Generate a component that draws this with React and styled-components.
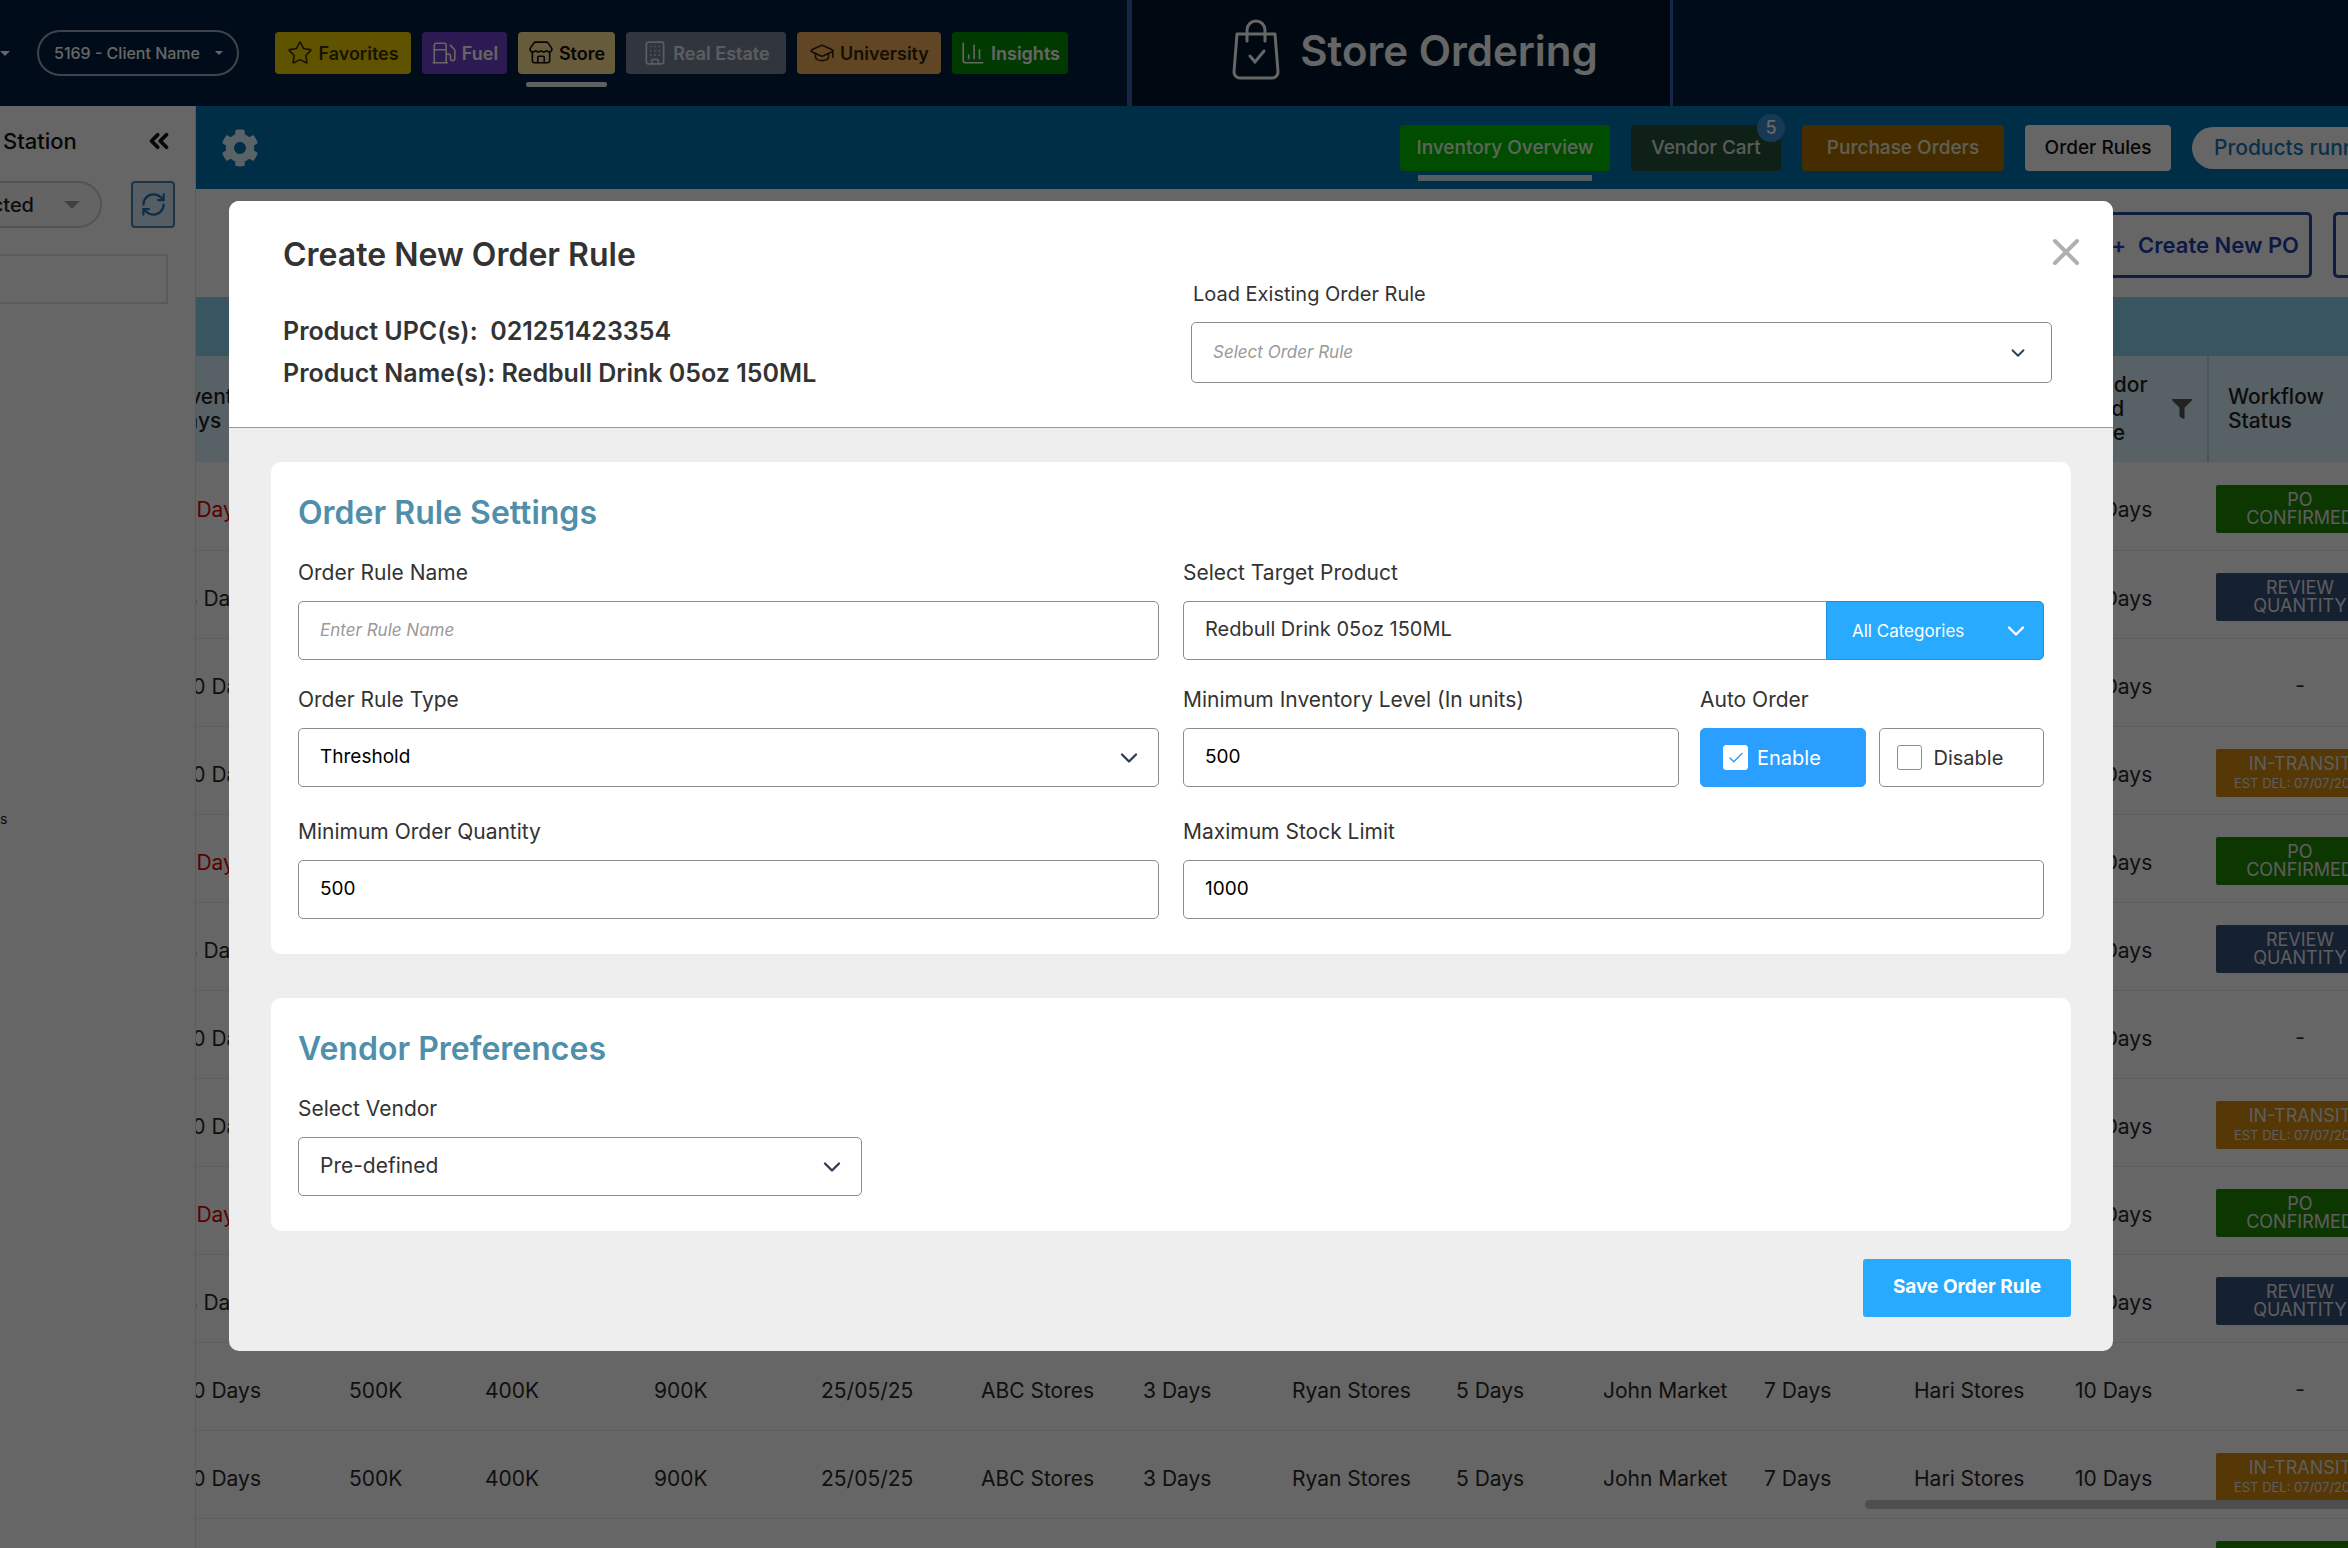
import { useState } from "react";
import styled, { createGlobalStyle } from "styled-components";
import {
  Star,
  Fuel,
  Store,
  Building,
  GraduationCap,
  ChartColumn,
  ChevronDown,
  ChevronsLeft,
  RefreshCw,
  Check,
} from "lucide-react";
import { FaCog, FaFilter } from "react-icons/fa";

const MODULES = [
  { name: "Favorites", icon: Star, bg: "#f0d000", color: "#3a3000", width: 136 },
  { name: "Fuel", icon: Fuel, bg: "#7242cc", color: "#ffffff", width: 85 },
  { name: "Store", icon: Store, bg: "#ffe394", color: "#111111", width: 97, active: true },
  { name: "Real Estate", icon: Building, bg: "#7c889c", color: "#e4e8ee", width: 160 },
  { name: "University", icon: GraduationCap, bg: "#efb05c", color: "#3a2400", width: 144 },
  { name: "Insights", icon: ChartColumn, bg: "#009200", color: "#ffffff", width: 116 },
];

const TABS = [
  { name: "Inventory Overview", bg: "#00c000", color: "#e8ffe8", width: 210, active: true },
  { name: "Vendor Cart", bg: "#265438", color: "#dfe8df", width: 150, count: 5 },
  { name: "Purchase Orders", bg: "#ac7200", color: "#f4ead0", width: 202 },
  { name: "Order Rules", bg: "#ffffff", color: "#111111", width: 146 },
];

const COLUMNS = [153, 136, 169, 167, 160, 162, 149, 164, 147, 161, 150, 161, 133, 140];

const STATUSES = ["confirmed", "review", "none", "transit"];
const ROWS = Array.from({ length: 13 }, (_, i) => STATUSES[i % 4]);
const DAYS = {
  confirmed: { text: "5 Days", end: 50 },
  review: { text: "8 Days", end: 57 },
  none: { text: "10 Days", end: 65 },
  transit: { text: "10 Days", end: 65 },
};

const CELLS = [
  "500K",
  "400K",
  "900K",
  "25/05/25",
  "ABC Stores",
  "3 Days",
  "Ryan Stores",
  "5 Days",
  "John Market",
  "7 Days",
  "Hari Stores",
  "10 Days",
];

const BagIcon = () => (
  <svg width="48" height="62" viewBox="0 0 48 62" fill="none" stroke="#ffffff" strokeWidth="3" strokeLinecap="round">
    <path d="M5 15h38l3 38a6 6 0 0 1-6 6H8a6 6 0 0 1-6-6z" strokeLinejoin="round" />
    <path d="M15 22V11a9 9 0 0 1 18 0v11" />
    <path d="M18 37l5 6 9-11" />
  </svg>
);

const CloseIcon = () => (
  <svg width="28" height="28" viewBox="0 0 28 28" stroke="#b0b0b0" strokeWidth="4" strokeLinecap="round">
    <path d="M3 3l22 22M25 3L3 25" />
  </svg>
);

const StatusBadge = ({ status }) => {
  if (status === "none") return <Dash>-</Dash>;
  if (status === "confirmed")
    return (
      <Badge $bg="#228a00">
        PO
        <br />
        CONFIRMED
      </Badge>
    );
  if (status === "review")
    return (
      <Badge $bg="#35507c">
        REVIEW
        <br />
        QUANTITY
      </Badge>
    );
  return (
    <Badge $bg="#d68a10">
      IN-TRANSIT
      <br />
      <small>EST DEL: 07/07/2025</small>
    </Badge>
  );
};

const TopBar = () => (
  <Header>
    <Client>
      <Caret $size={5} />
      <ClientButton type="button">
        5169 - Client Name <Caret />
      </ClientButton>
    </Client>
    <Modules>
      {MODULES.map(({ name, icon: Icon, bg, color, width, active }) => (
        <ModuleLink key={name} href="#" $bg={bg} $color={color} $width={width} $active={active}>
          <Icon size={26} strokeWidth={1.5} />
          {name}
        </ModuleLink>
      ))}
    </Modules>
    <PageTitle>
      <BagIcon />
      Store Ordering
    </PageTitle>
  </Header>
);

const SideBar = () => (
  <Side>
    <SideTop>
      Station
      <ChevronsLeft size={30} strokeWidth={3} />
    </SideTop>
    <SideTools>
      <SelectedPill type="button">
        Selected <Caret $size={8} />
      </SelectedPill>
      <RefreshButton type="button" aria-label="Refresh">
        <RefreshCw size={27} />
      </RefreshButton>
    </SideTools>
    <SideSearch aria-label="Search stations" />
    <SideNote>s</SideNote>
  </Side>
);

const Inventory = () => (
  <Main>
    <Tabs>
      <FaCog size={38} />
      <TabList>
        {TABS.map((tab) => (
          <Tab key={tab.name} href="#" $bg={tab.bg} $color={tab.color} $width={tab.width} $active={tab.active}>
            {tab.name}
            {tab.count ? <Count>{tab.count}</Count> : null}
          </Tab>
        ))}
        <Running type="button">Products running</Running>
      </TabList>
    </Tabs>
    <Actions>
      <OutlineButton type="button">
        <span>+</span> Create New PO
      </OutlineButton>
      <OutlineButton type="button" aria-label="More" $cut />
    </Actions>
    <Table>
      <colgroup>
        {COLUMNS.map((width, i) => (
          <col key={i} width={width} />
        ))}
      </colgroup>
      <thead>
        <GroupRow>
          <th colSpan={14} />
        </GroupRow>
        <HeadRow>
          <th>
            <DaysText $end={70}>
              Inventory
              <br />
              Days
            </DaysText>
          </th>
          <th colSpan={11} />
          <th>
            <LeadTime>
              <span>
                Vendor
                <br />
                Lead
                <br />
                Time
              </span>
              <FaFilter size={20} />
            </LeadTime>
          </th>
          <th>
            Workflow
            <br />
            Status
          </th>
        </HeadRow>
      </thead>
      <tbody>
        {ROWS.map((status, i) => (
          <Row key={i}>
            <td>
              <DaysText $end={DAYS[status].end} $low={status === "confirmed"}>
                {DAYS[status].text}
              </DaysText>
            </td>
            {CELLS.map((cell, n) => (
              <td key={n}>{cell}</td>
            ))}
            <td>
              <StatusBadge status={status} />
            </td>
          </Row>
        ))}
      </tbody>
    </Table>
    <ScrollThumb />
  </Main>
);

const Select = ({ id, options, icon = 28, muted, dark }) => (
  <SelectWrap>
    <SelectInput id={id} $muted={muted} $dark={dark}>
      {options.map((option) => (
        <option key={option}>{option}</option>
      ))}
    </SelectInput>
    <ChevronDown size={icon} strokeWidth={2} />
  </SelectWrap>
);

const OrderRuleModal = () => {
  const [auto, setAuto] = useState(true);

  return (
    <Overlay>
      <Modal role="dialog" aria-labelledby="modal-title">
        <ModalHeader>
          <ProductInfo>
            <ModalTitle id="modal-title">Create New Order Rule</ModalTitle>
            <p>Product UPC(s):&nbsp; 021251423354</p>
            <p>Product Name(s): Redbull Drink 05oz 150ML</p>
          </ProductInfo>
          <LoadRule>
            <Label htmlFor="load">Load Existing Order Rule</Label>
            <Select id="load" options={["Select Order Rule"]} icon={22} muted />
          </LoadRule>
          <CloseButton type="button" aria-label="Close">
            <CloseIcon />
          </CloseButton>
        </ModalHeader>

        <ModalBody>
          <Card>
            <CardTitle>Order Rule Settings</CardTitle>
            <Fields>
              <Field>
                <Label htmlFor="name">Order Rule Name</Label>
                <Input id="name" placeholder="Enter Rule Name" />
              </Field>
              <Field>
                <Label htmlFor="product">Select Target Product</Label>
                <ProductGroup>
                  <Input id="product" defaultValue="Redbull Drink 05oz 150ML" $large />
                  <CategoryWrap>
                    <CategorySelect aria-label="Category">
                      <option>All Categories</option>
                    </CategorySelect>
                    <ChevronDown size={28} />
                  </CategoryWrap>
                </ProductGroup>
              </Field>
              <Field $spaced>
                <Label htmlFor="type">Order Rule Type</Label>
                <Select id="type" options={["Threshold"]} dark />
              </Field>
              <LevelRow>
                <Field>
                  <Label htmlFor="level">Minimum Inventory Level (In units)</Label>
                  <Input id="level" defaultValue="500" />
                </Field>
                <Field>
                  <Label as="span">Auto Order</Label>
                  <Toggles>
                    <Toggle $on={auto}>
                      <Box>
                        <input type="checkbox" checked={auto} onChange={() => setAuto(true)} />
                        <Check size={18} />
                      </Box>
                      Enable
                    </Toggle>
                    <Toggle $on={!auto}>
                      <Box>
                        <input type="checkbox" checked={!auto} onChange={() => setAuto(false)} />
                        <Check size={18} />
                      </Box>
                      Disable
                    </Toggle>
                  </Toggles>
                </Field>
              </LevelRow>
              <Field>
                <Label htmlFor="min">Minimum Order Quantity</Label>
                <Input id="min" defaultValue="500" />
              </Field>
              <Field>
                <Label htmlFor="max">Maximum Stock Limit</Label>
                <Input id="max" defaultValue="1000" />
              </Field>
            </Fields>
          </Card>

          <Card>
            <CardTitle>Vendor Preferences</CardTitle>
            <VendorField>
              <Label htmlFor="vendor">Select Vendor</Label>
              <Select id="vendor" options={["Pre-defined"]} />
            </VendorField>
          </Card>

          <SaveButton type="button">Save Order Rule</SaveButton>
        </ModalBody>
      </Modal>
    </Overlay>
  );
};

const App = () => {
  return (
    <>
      <GlobalStyle />
      <Page>
        <TopBar />
        <Content>
          <SideBar />
          <Inventory />
        </Content>
      </Page>
      <OrderRuleModal />
    </>
  );
};

const GlobalStyle = createGlobalStyle`
  * {
    box-sizing: border-box;
  }
  body {
    margin: 0;
    font-family: Inter, "Open Sans", sans-serif;
    color: #333333;
  }
  button, input, select {
    font-family: inherit;
  }
  p, h1, h2 {
    margin: 0;
  }
`;

const Page = styled.div`
  height: 100vh;
  overflow: hidden;
  display: flex;
  flex-direction: column;
  background: #ffffff;
`;

const Header = styled.header`
  height: 106px;
  flex-shrink: 0;
  display: flex;
  align-items: center;
  background: #002040;
`;

const Client = styled.div`
  width: 275px;
  display: flex;
  align-items: center;
  gap: 27px;
  color: #ffffff;
`;

const ClientButton = styled.button`
  width: 202px;
  height: 46px;
  display: flex;
  align-items: center;
  justify-content: space-between;
  padding: 0 14px 0 15px;
  border: 2px solid #a0a8b4;
  border-radius: 23px;
  background: transparent;
  color: #ffffff;
  font-size: 16px;
  font-weight: 500;
  white-space: nowrap;
`;

const Caret = styled.span`
  border: ${({ $size }) => $size || 4}px solid transparent;
  border-top-color: currentColor;
  border-bottom: 0;
`;

const Modules = styled.nav`
  width: 852px;
  display: flex;
  gap: 11px;
`;

const ModuleLink = styled.a`
  position: relative;
  width: ${({ $width }) => $width}px;
  height: 42px;
  display: flex;
  align-items: center;
  justify-content: center;
  gap: 5px;
  border-radius: 4px;
  background: ${({ $bg }) => $bg};
  color: ${({ $color }) => $color};
  font-size: 18px;
  font-weight: 600;
  text-decoration: none;
  white-space: nowrap;

  &::after {
    content: "";
    display: ${({ $active }) => ($active ? "block" : "none")};
    position: absolute;
    left: 8px;
    right: 8px;
    bottom: -13px;
    height: 5px;
    border-radius: 2px;
    background: #e8eef8;
  }
`;

const PageTitle = styled.div`
  width: 546px;
  height: 106px;
  display: flex;
  align-items: center;
  justify-content: center;
  gap: 20px;
  padding: 0 0 6px 28px;
  border-left: 5px solid #375fb0;
  border-right: 3px solid #375fb0;
  background: #00182c;
  color: #ffffff;
  font-size: 42px;
  font-weight: 600;
`;

const Content = styled.div`
  flex: 1;
  min-height: 0;
  display: flex;
`;

const Side = styled.aside`
  width: 196px;
  flex-shrink: 0;
  border-right: 1px solid #e0e0e0;
`;

const SideTop = styled.div`
  display: flex;
  align-items: center;
  justify-content: space-between;
  padding: 20px 21px 0 3px;
  color: #111111;
  font-size: 22px;
  font-weight: 500;
`;

const SideTools = styled.div`
  display: flex;
  align-items: center;
  justify-content: space-between;
  margin-top: 25px;
  padding-right: 20px;
`;

const SelectedPill = styled.button`
  width: 102px;
  height: 47px;
  display: flex;
  align-items: center;
  justify-content: flex-end;
  gap: 30px;
  padding: 0 20px 0 0;
  overflow: hidden;
  border: 2px solid #d0d0d0;
  border-left: 0;
  border-radius: 0 24px 24px 0;
  background: #fafafa;
  color: #222222;
  font-size: 20px;
  font-weight: 500;

  ${Caret} {
    color: #a0a0a0;
  }
`;

const RefreshButton = styled.button`
  width: 44px;
  height: 47px;
  display: grid;
  place-items: center;
  padding: 0;
  border: 2px solid #4a80b0;
  border-radius: 4px;
  background: #d8ecfa;
  color: #2a70b0;
`;

const SideSearch = styled.input`
  width: 168px;
  height: 50px;
  margin-top: 26px;
  border: 2px solid #e0e0e0;
  border-left: 0;
`;

const SideNote = styled.p`
  margin-top: 506px;
  color: #222222;
  font-size: 14px;
  line-height: 18px;
`;

const Main = styled.main`
  position: relative;
  flex: 1;
  min-width: 0;
  overflow: hidden;
`;

const Tabs = styled.div`
  height: 83px;
  display: flex;
  align-items: center;
  justify-content: space-between;
  padding-left: 25px;
  background: #0073b0;
  color: #dff4ff;
`;

const TabList = styled.nav`
  display: flex;
  align-items: center;
  gap: 21px;
`;

const Tab = styled.a`
  position: relative;
  width: ${({ $width }) => $width}px;
  height: 46px;
  display: grid;
  place-items: center;
  border-radius: 4px;
  background: ${({ $bg }) => $bg};
  color: ${({ $color }) => $color};
  font-size: 19px;
  font-weight: 500;
  text-decoration: none;
  white-space: nowrap;

  &::after {
    content: "";
    display: ${({ $active }) => ($active ? "block" : "none")};
    position: absolute;
    left: 18px;
    right: 18px;
    bottom: -10px;
    height: 6px;
    background: #d0e8f4;
  }
`;

const Count = styled.span`
  position: absolute;
  top: -11px;
  right: -4px;
  width: 28px;
  height: 28px;
  border-radius: 50%;
  background: #3a90d8;
  color: #ffffff;
  font-size: 18px;
  line-height: 28px;
  text-align: center;
`;

const Running = styled.button`
  width: 156px;
  height: 42px;
  padding: 0 0 0 22px;
  overflow: hidden;
  border: 0;
  border-radius: 21px 0 0 21px;
  background: #ffffff;
  color: #1478b8;
  font-size: 21px;
  font-weight: 500;
  text-align: left;
  white-space: nowrap;
`;

const Actions = styled.div`
  height: 108px;
  display: flex;
  justify-content: flex-end;
  gap: 21px;
  padding-top: 23px;
`;

const OutlineButton = styled.button`
  width: ${({ $cut }) => ($cut ? 15 : 216)}px;
  height: 66px;
  display: flex;
  align-items: center;
  justify-content: flex-end;
  gap: 12px;
  padding: 0 ${({ $cut }) => ($cut ? 0 : 10)}px 0 0;
  border: 3px solid #2848a0;
  border-right-width: ${({ $cut }) => ($cut ? 0 : 3)}px;
  border-radius: ${({ $cut }) => ($cut ? "5px 0 0 5px" : "5px")};
  background: #ffffff;
  color: #1f3fae;
  font-size: 22px;
  font-weight: 600;
  white-space: nowrap;
`;

const Table = styled.table`
  width: 100%;
  table-layout: fixed;
  border-collapse: collapse;
`;

const GroupRow = styled.tr`
  height: 59px;
  background: #8cd4f0;
`;

const HeadRow = styled.tr`
  height: 106px;
  background: #dcf2fc;
  color: #222222;

  th {
    padding: 0;
    font-size: 21px;
    font-weight: 500;
    line-height: 24px;
    text-align: left;
  }
  th:last-child {
    padding-left: 19px;
    border-left: 2px solid #b4d4e4;
  }
`;

const LeadTime = styled.div`
  display: flex;
  align-items: center;
  justify-content: space-between;
  padding-right: 15px;

  svg {
    color: #555555;
  }
`;

const Row = styled.tr`
  height: 88px;

  td {
    padding: 8px 0 0;
    border-bottom: 1px solid #ececec;
    color: #2a2a2a;
    font-size: 21px;
    white-space: nowrap;
  }
  td:last-child {
    padding: 6px 0 0 8px;
  }
`;

const DaysText = styled.span`
  width: ${({ $end }) => $end}px;
  display: flex;
  justify-content: flex-end;
  color: ${({ $low }) => ($low ? "#e00000" : "inherit")};
`;

const Badge = styled.div`
  width: 168px;
  height: 48px;
  padding-top: 6px;
  border-radius: 2px;
  background: ${({ $bg }) => $bg};
  color: #e8e8e8;
  font-size: 18px;
  line-height: 18px;
  text-align: center;

  small {
    font-size: 13px;
  }
`;

const Dash = styled.div`
  width: 168px;
  text-align: center;
`;

const ScrollThumb = styled.div`
  position: absolute;
  right: 0;
  bottom: 39px;
  width: 483px;
  height: 9px;
  border-radius: 5px 0 0 5px;
  background: #c4c4c4;
`;

const Overlay = styled.div`
  position: fixed;
  inset: 0;
  overflow: auto;
  padding: 201px 235px 0 229px;
  background: rgba(0, 0, 0, 0.6);
`;

const Modal = styled.section`
  border-radius: 10px;
  overflow: hidden;
  background: #eeeeee;
`;

const Label = styled.label`
  font-size: 21px;
  line-height: 28px;
`;

const ModalHeader = styled.div`
  display: flex;
  align-items: flex-start;
  height: 227px;
  padding: 0 33px 0 54px;
  border-bottom: 1px solid #999999;
  background: #ffffff;
`;

const ProductInfo = styled.div`
  flex: 1;
  padding-top: 32px;

  p {
    font-size: 25px;
    font-weight: 600;
    line-height: 42px;
  }
`;

const ModalTitle = styled.h1`
  margin-bottom: 33px;
  font-size: 32px;
  font-weight: 600;
  line-height: 44px;
`;

const CloseButton = styled.button`
  margin-top: 37px;
  padding: 0;
  border: 0;
  background: transparent;
  line-height: 0;
  cursor: pointer;
`;

const ModalBody = styled.div`
  display: flex;
  flex-direction: column;
  padding: 34px 42px;
`;

const Card = styled.section`
  padding: 29px 27px 35px;
  border-radius: 10px;
  background: #ffffff;

  & + & {
    margin-top: 44px;
  }
`;

const CardTitle = styled.h2`
  margin-bottom: 24px;
  color: #4f8fab;
  font-size: 32px;
  font-weight: 600;
  line-height: 44px;
`;

const Fields = styled.div`
  display: grid;
  grid-template-columns: 1fr 1fr;
  gap: 26px 24px;
`;

const Field = styled.div`
  min-width: 0;
  display: flex;
  flex-direction: column;
  gap: 14px;
  padding-bottom: ${({ $spaced }) => ($spaced ? 5 : 0)}px;
`;

const VendorField = styled(Field)`
  width: 564px;
`;

const LevelRow = styled.div`
  display: grid;
  grid-template-columns: 1fr 344px;
  gap: 21px;
`;

const Input = styled.input`
  width: 100%;
  height: 59px;
  padding: 0 21px 3px;
  border: 1px solid #8c8c8c;
  border-radius: 5px;
  background: #ffffff;
  color: ${({ $large }) => ($large ? "#333333" : "#000000")};
  font-size: ${({ $large }) => ($large ? 20 : 19)}px;

  &::placeholder {
    color: #999999;
    font-size: 17px;
    font-style: italic;
  }
`;

const SelectWrap = styled.div`
  display: grid;
  align-items: center;

  > * {
    grid-area: 1 / 1;
  }
  svg {
    justify-self: end;
    margin-right: 16px;
    color: #2c3e57;
    pointer-events: none;
  }
`;

const SelectInput = styled.select`
  width: 100%;
  height: 59px;
  padding: 0 21px 2px;
  appearance: none;
  border: 1px solid #8c8c8c;
  border-radius: 5px;
  background: #ffffff;
  color: ${({ $muted, $dark }) => ($muted ? "#999999" : $dark ? "#000000" : "#333333")};
  font-size: ${({ $muted, $dark }) => ($muted ? 17 : $dark ? 19 : 21)}px;
  font-style: ${({ $muted }) => ($muted ? "italic" : "normal")};
`;

const LoadRule = styled.div`
  width: 861px;
  display: flex;
  flex-direction: column;
  gap: 14px;
  padding-top: 79px;

  ${Label} {
    padding-left: 2px;
    font-size: 20px;
  }
  ${SelectInput} {
    height: 61px;
  }
  svg {
    margin-right: 23px;
  }
`;

const ProductGroup = styled.div`
  display: grid;
  grid-template-columns: 1fr 218px;

  ${Input} {
    border-right: 0;
    border-radius: 5px 0 0 5px;
  }
`;

const CategoryWrap = styled(SelectWrap)`
  svg {
    margin-right: 14px;
    color: #ffffff;
  }
`;

const CategorySelect = styled(SelectInput)`
  padding: 0 25px;
  border-color: #1c8fdc;
  border-radius: 0 5px 5px 0;
  background: #28aaff;
  color: #ffffff;
  font-size: 17px;
`;

const Toggles = styled.div`
  display: grid;
  grid-template-columns: 1fr 1fr;
  gap: 13px;
`;

const Toggle = styled.label`
  height: 59px;
  display: flex;
  align-items: center;
  gap: ${({ $on }) => ($on ? 9 : 12)}px;
  padding-left: ${({ $on }) => ($on ? 22 : 17)}px;
  border: 1px solid ${({ $on }) => ($on ? "#2a9fff" : "#8c8c8c")};
  border-radius: 5px;
  background: ${({ $on }) => ($on ? "#2a9fff" : "#ffffff")};
  color: ${({ $on }) => ($on ? "#ffffff" : "#333333")};
  font-size: 20px;
`;

const Box = styled.span`
  display: grid;
  place-items: center;

  > * {
    grid-area: 1 / 1;
  }
  input {
    width: 25px;
    height: 25px;
    margin: 0;
    appearance: none;
    border: 1px solid #8c8c8c;
    border-radius: 3px;
    background: #ffffff;
  }
  input:checked {
    border-color: #ffffff;
  }
  svg {
    z-index: 1;
    color: #2a9fff;
    pointer-events: none;
  }
  input:not(:checked) + svg {
    display: none;
  }
`;

const SaveButton = styled.button`
  width: 208px;
  height: 58px;
  margin-top: 28px;
  align-self: flex-end;
  padding: 0 0 3px;
  border: 0;
  border-radius: 3px;
  background: #28aaff;
  color: #ffffff;
  font-size: 19px;
  font-weight: 700;
  cursor: pointer;
`;

export default App;
